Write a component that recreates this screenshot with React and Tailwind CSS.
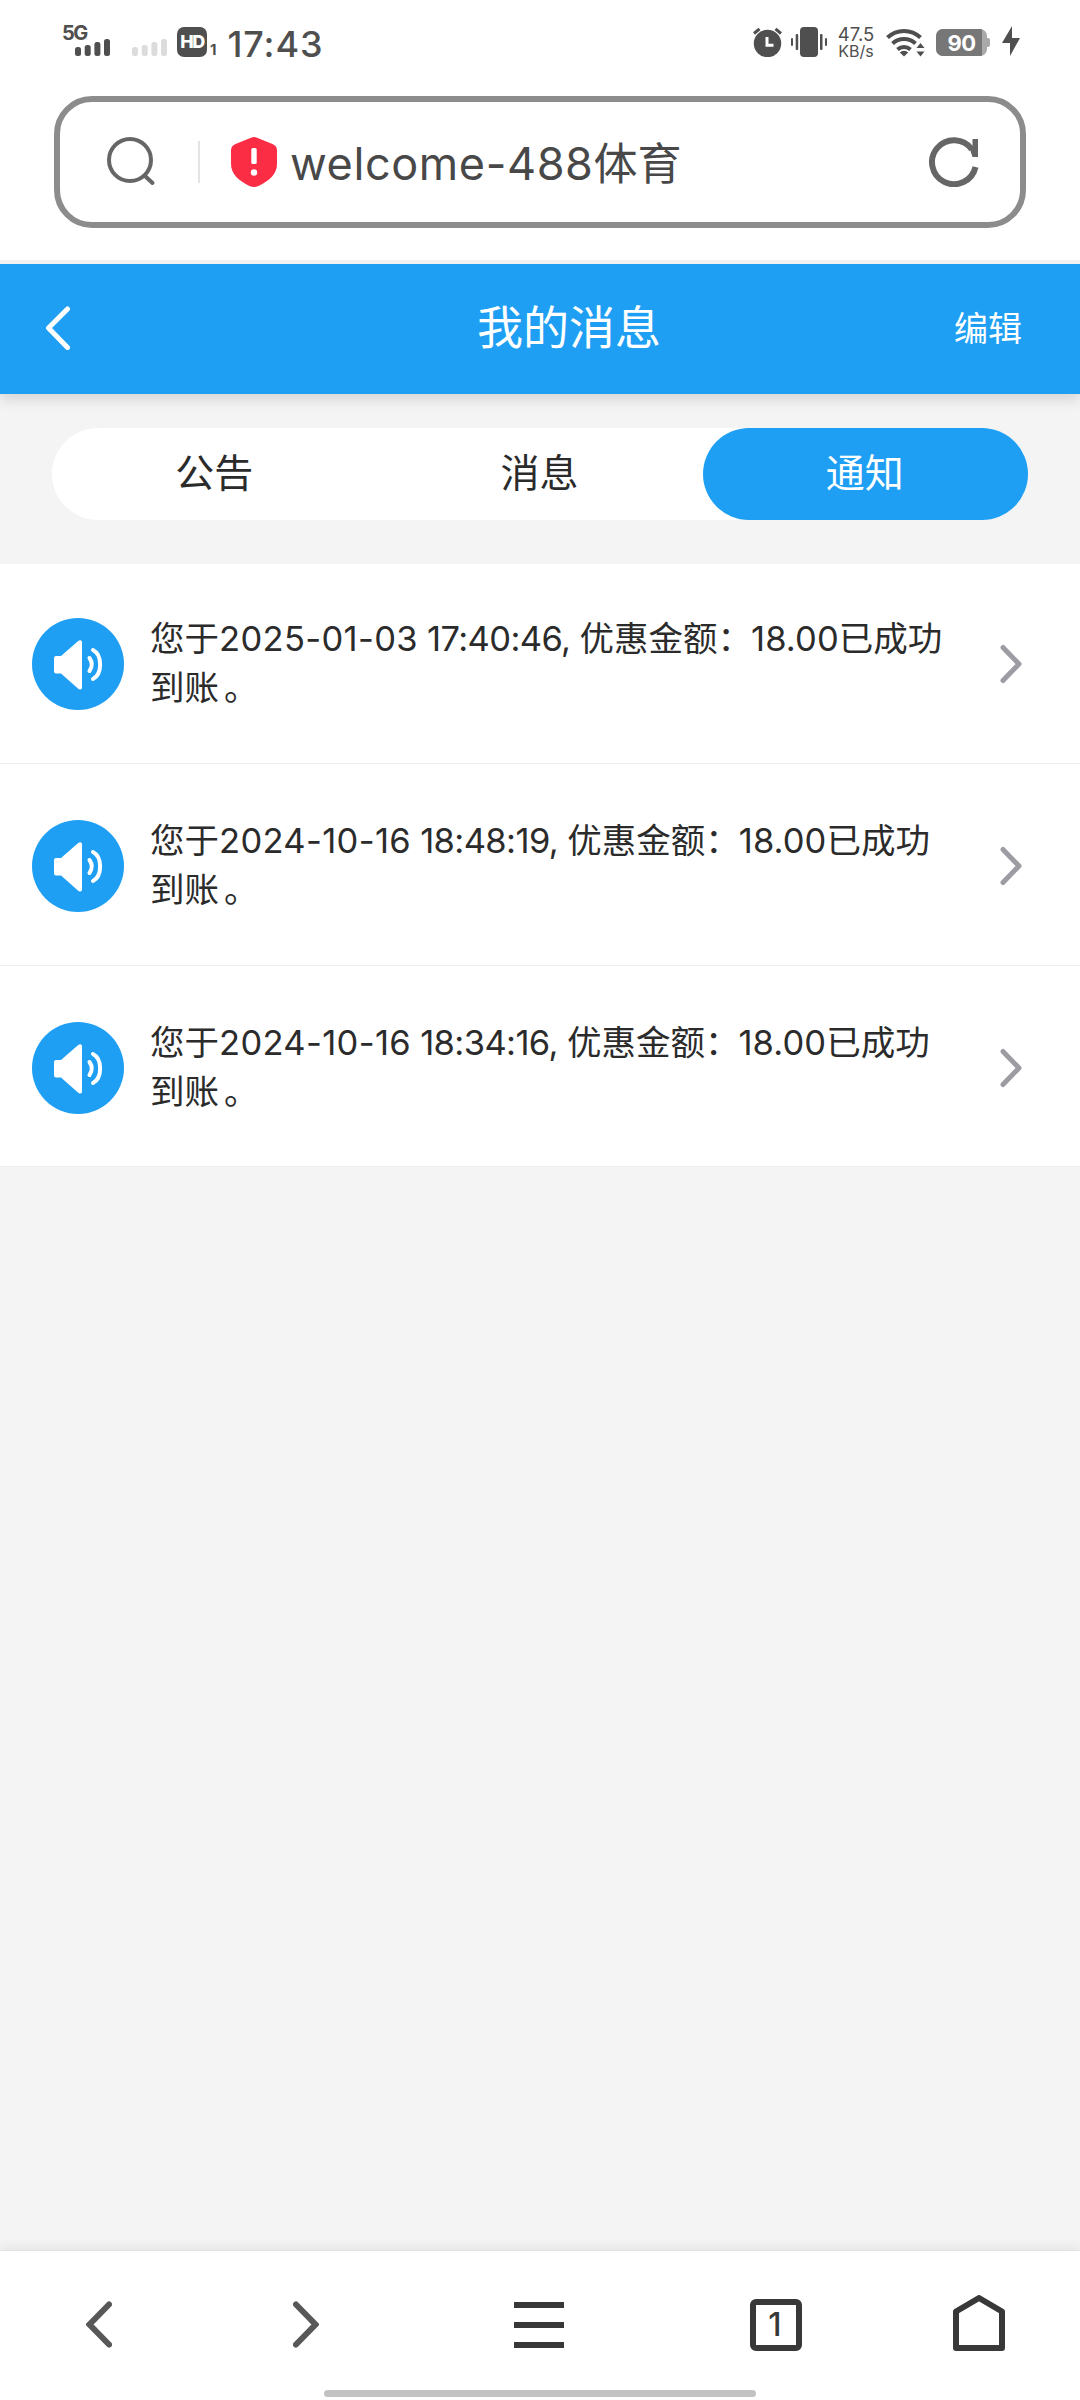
import React, { useState } from "react";

const messages = [
  { id: 1, date: "2025-01-03", time: "17:40:46", amount: "18.00" },
  { id: 2, date: "2024-10-16", time: "18:48:19", amount: "18.00" },
  { id: 3, date: "2024-10-16", time: "18:34:16", amount: "18.00" },
];

const tabs = ["公告", "消息", "通知"];

function SignalBars({ className }) {
  return (
    <svg className={className} width="36" height="18" viewBox="0 0 36 18" fill="currentColor">
      <rect x="0" y="9" width="6" height="9" rx="2.5" />
      <rect x="9.7" y="7" width="6" height="11" rx="2.5" />
      <rect x="19.4" y="4" width="6" height="14" rx="2.5" />
      <rect x="29" y="1" width="6" height="17" rx="2.5" />
    </svg>
  );
}

function StatusBar() {
  return (
    <div className="flex h-[96px] items-start justify-between pl-[62px] pr-[60px] pt-[24px] text-[#4f4f4f]">
      <div className="flex items-start">
        <div className="w-[50px]">
          <div className="text-[20px] font-bold leading-[18px] tracking-[-1.5px]">5G</div>
          <SignalBars className="-mt-[4px] ml-[13px]" />
        </div>
        <SignalBars className="ml-[20px] mt-[14px] text-[#dcdcdc]" />
        <div className="ml-[9px] mt-[3px] flex h-[30px] w-[30px] items-center justify-center rounded-[7px] bg-[#4f4f4f] text-[18px] font-extrabold leading-none tracking-[-1.5px] text-white">
          HD
        </div>
        <span className="ml-[3px] mt-[18px] text-[15px] font-bold leading-[16px]">1</span>
        <span className="ml-[11px] mt-[1px] text-[36px] font-medium leading-[38px] tracking-[0.9px]">17:43</span>
      </div>

      <div className="flex items-start">
        <svg className="mt-[3px]" width="30" height="30" viewBox="0 0 30 30">
          <circle cx="14.5" cy="16.5" r="13.7" fill="currentColor" />
          <path d="M1 6.5 6.500 1.800M28 6.500 22.500 1.800" stroke="currentColor" strokeWidth="3" />
          <path d="M14 10v8.300H20.500" fill="none" stroke="#fff" strokeWidth="3" />
        </svg>
        <svg className="ml-[8px] mt-[3px]" width="36" height="30" viewBox="0 0 36 30" fill="currentColor">
          <rect x="9" y="0" width="18" height="30" rx="4" />
          <rect x="4.7" y="7" width="2.5" height="16" rx="1" />
          <rect x="0" y="11" width="2" height="8" rx="1" />
          <rect x="29" y="7" width="2.5" height="16" rx="1" />
          <rect x="34" y="11" width="2" height="8" rx="1" />
        </svg>
        <div className="ml-[9px] mt-[2px] w-[40px] text-center">
          <div className="text-[18.5px] leading-[17px]">47.5</div>
          <div className="text-[16px] leading-[16px]">KB/s</div>
        </div>
        <svg className="ml-[10px] mt-[4px]" width="40" height="30" viewBox="0 0 40 30">
          <g fill="none" stroke="currentColor" strokeWidth="4">
            <path d="M1.5 9.5a24 24 0 0 1 33 0" />
            <path d="M6.5 15.5a17 17 0 0 1 23 0" />
            <path d="M11.5 21.5a10 10 0 0 1 13 0" />
          </g>
          <path d="M13.8 24.5a6 6 0 0 1 8.4 0L18 28.5z" fill="currentColor" />
          <path d="M30.5 20 34.5 15l4 5zM30.5 23.5l4 5 4-5z" fill="currentColor" />
        </svg>
        <div className="ml-[10px] mt-[5px] flex items-center">
          <div className="flex h-[27px] w-[51px] overflow-hidden rounded-[7px] bg-[#a9a9a9]">
            <div className="flex w-[46px] items-center justify-center bg-[#777777] pl-[5px] text-[22px] font-bold leading-none tracking-[-0.5px] text-white">
              90
            </div>
          </div>
          <div className="h-[9px] w-[3px] rounded-r-[2px] bg-[#a9a9a9]" />
        </div>
        <svg className="ml-[12px] mt-[2px]" width="18" height="30" viewBox="0 0 18 30" fill="currentColor">
          <path d="M10 0v12h8L8 30V17H0z" />
        </svg>
      </div>
    </div>
  );
}

function AddressBar() {
  return (
    <div className="mx-[54px] flex h-[132px] items-center rounded-[38px] border-[6px] border-[#8c8c8c] bg-white pl-[46px] pr-[41px]">
      <svg width="50" height="50" viewBox="0 0 50 50" fill="none" stroke="#666" strokeWidth="4">
        <circle cx="24" cy="23" r="21" />
        <path d="M39 39l7.500 7" strokeLinecap="round" />
      </svg>
      <div className="ml-[42px] h-[42px] w-[2px] bg-[#e4e4e4]" />
      <svg className="ml-[31px]" width="46" height="50" viewBox="0 0 46 50">
        <path
          d="M20 .7q3-1.200 6 0l15.500 6.300Q46 9 46 13v14c0 10-8 17-18.500 22q-4.500 2-9 0C8 44 0 37 0 27V13q0-4 4.500-6z"
          fill="#fa2d45"
        />
        <rect x="20.300" y="11" width="5.400" height="16" rx="1.500" fill="#fff" />
        <circle cx="23" cy="35.500" r="3.200" fill="#fff" />
      </svg>
      <div className="ml-[13px] grow pt-[4px] text-[45px] leading-[60px] text-[#484848]">
        <span className="tracking-[0.6px]">welcome-488</span>
        <span className="text-[44px]">体育</span>
      </div>
      <svg width="50" height="50" viewBox="0 0 50 50" fill="none" stroke="#666" strokeWidth="6">
        <path d="M46.500 30A22 22 0 1 1 43 12.500" />
        <path d="M43.500 2h5.500v18h-5.500l-2-6 2-4z" fill="#666" stroke="none" />
      </svg>
    </div>
  );
}

function SpeakerIcon() {
  return (
    <svg className="shrink-0" width="92" height="92" viewBox="0 0 92 92">
      <circle cx="46" cy="46" r="46" fill="#1e9ff4" />
      <path
        d="M24 38h5L46.500 22.800q3.500-1.500 3.500 1.700v45q0 3-3.500 1.500L29 55.500h-5q-2 0-2-2V40q0-2 2-2z"
        fill="#fff"
      />
      <g fill="none" stroke="#fff" strokeWidth="4" strokeLinecap="round">
        <path d="M57.500 40q4.500 6.500 0 13" />
        <path d="M61 32c9.500 5 9.500 24 0 29" />
      </g>
    </svg>
  );
}

function MessageRow({ message }) {
  return (
    <li className="flex h-[201.5px] items-center border-b border-[#eeeeee] bg-white pl-[32px] pr-[58px] pt-[4px] first:h-[200px] first:pt-px">
      <SpeakerIcon />
      <p className="-mt-[2px] ml-[26px] w-[802px] text-[34.5px] leading-[49px] text-[#2b2b2b]">
        您于<span className="tracking-[0.35px]">{message.date}</span>
        <span className="tracking-[-0.6px]"> {message.time}, </span>优惠金额：
        <span className="-ml-px tracking-[0.1px]">{message.amount}</span>已成功到账
        <span className="ml-[5px]">。</span>
      </p>
      <svg className="ml-auto" width="22" height="40" viewBox="0 0 22 40" fill="none" stroke="#9c9ca2" strokeWidth="5" strokeLinecap="round" strokeLinejoin="round">
        <path d="M3 3.500 19 20 3 36.500" />
      </svg>
    </li>
  );
}

function BottomNav() {
  return (
    <nav className="relative h-[150px] border-t border-[#e2e2e2] bg-white shadow-[0_-2px_12px_rgba(0,0,0,0.08)]">
      <div className="flex items-center pl-[86px] pt-[44px] text-[#383838]">
        <svg width="26" height="56" viewBox="0 0 26 56" fill="none" stroke="#585858" strokeWidth="6" strokeLinecap="round">
          <path d="M23 9.500 3.500 29.500 23 49.500" />
        </svg>
        <svg className="ml-[181px]" width="26" height="56" viewBox="0 0 26 56" fill="none" stroke="#585858" strokeWidth="6" strokeLinecap="round">
          <path d="M3 9.500 22.500 29.500 3 49.500" />
        </svg>
        <div className="ml-[195px] mt-[3px] flex w-[50px] flex-col gap-[14px]">
          <span className="h-[6px] bg-[#383838]" />
          <span className="h-[6px] bg-[#383838]" />
          <span className="h-[6px] bg-[#383838]" />
        </div>
        <div className="ml-[186px] mt-[3px] flex h-[52px] w-[52px] items-center justify-center rounded-[6px] border-[6px] border-[#383838] pr-[2px] text-[32px] font-medium leading-none">
          1
        </div>
        <svg className="ml-[151px]" width="52" height="56" viewBox="0 0 52 56" fill="none" stroke="currentColor" strokeWidth="6" strokeLinejoin="round">
          <path d="M3 16.500 26 3l23 13.500V53H3z" />
        </svg>
      </div>
      <div className="absolute bottom-[3px] left-[324px] h-[7px] w-[432px] rounded-full bg-[#c2c2c2]" />
    </nav>
  );
}

export default function App() {
  const [active, setActive] = useState("通知");

  return (
    <div className="flex h-[2400px] w-[1080px] flex-col bg-[#f4f4f4] font-['Inter','Noto_Sans_CJK_SC',sans-serif]">
      <div className="h-[260px] bg-white">
        <StatusBar />
        <AddressBar />
      </div>

      <header className="mt-[4px] grid h-[130px] grid-cols-3 items-center bg-[#1e9ff4] pl-[45px] pr-[58px] text-white shadow-[0_6px_12px_rgba(0,0,0,0.12)]">
        <svg className="-mt-[3px]" width="26" height="44" viewBox="0 0 26 44" fill="none" stroke="#fff" strokeWidth="5" strokeLinecap="round" strokeLinejoin="round">
          <path d="M22.500 3 3.500 22 22.500 41.500" />
        </svg>
        <h1 className="-mr-[40px] -mt-[5px] ml-[31px] text-center text-[46px] leading-[60px]">我的消息</h1>
        <button className="text-right text-[34px] leading-[48px]">编辑</button>
      </header>

      <div className="mx-[52px] mb-[44px] mt-[34px] flex h-[92px] rounded-full bg-white">
        {tabs.map((tab) => (
          <button
            key={tab}
            onClick={() => setActive(tab)}
            className={
              tab === active
                ? "flex-1 rounded-full bg-[#1e9ff4] pb-px pr-px text-[39px] text-white"
                : "flex-1 pb-px pr-px text-[39px] text-[#2b2b2b]"
            }
          >
            {tab}
          </button>
        ))}
      </div>

      <ul className="grow">
        {messages.map((message) => (
          <MessageRow key={message.id} message={message} />
        ))}
      </ul>

      <BottomNav />
    </div>
  );
}
